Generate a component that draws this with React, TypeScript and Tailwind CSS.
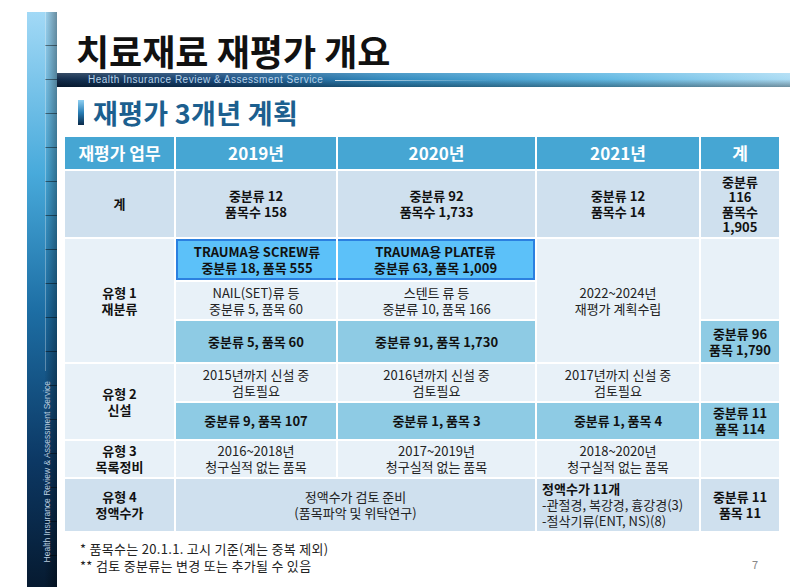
import React from 'react';

const head = 'flex items-center justify-center bg-[#46a6d3] text-white font-bold text-[17px]';
const sum = 'flex flex-col items-center justify-center bg-[#cfe0ee] font-bold';
const light = 'flex flex-col items-center justify-center bg-[#e8f1f8]';
const mid = 'flex flex-col items-center justify-center bg-[#8ecbe4] font-bold';
const trauma = 'flex flex-col items-center justify-center bg-[#5cc1f9] font-bold border-y-2 border-[#2b80e0]';

const App: React.FC = () => {
  return (
    <div className="w-[800px] h-[587px] bg-white flex overflow-hidden font-['Noto_Sans_CJK_KR',sans-serif] text-[#111]">
      {/* Side rail */}
      <div className="relative ml-[27px] mt-[12px] w-[30px] h-[575px] shrink-0 flex flex-col pb-[25px] bg-[linear-gradient(to_bottom,#a2d9f6_0%,#48aadb_28%,#1d6ea4_52%,#0c3864_78%,#061a30_100%)]">
        <div className="absolute right-0 top-0 h-full w-[12px] bg-[repeating-linear-gradient(to_bottom,transparent_0px,transparent_33px,rgba(0,0,0,0.45)_33px,rgba(0,0,0,0.45)_34px),linear-gradient(to_right,rgba(0,0,0,0.02),rgba(0,0,0,0.35))]" />
        <div className="relative ml-[18px] w-px flex-1 bg-white/30 mb-[10px]" />
        <span className="relative ml-[15px] rotate-180 [writing-mode:vertical-rl] font-['Liberation_Sans',sans-serif] text-[8.5px] leading-[10px] text-[#b9cde0] whitespace-nowrap">
          Health Insurance Review &amp; Assessment Service
        </span>
      </div>

      {/* Content */}
      <div className="w-[733px] shrink-0 flex flex-col">
        <div className="h-[73px] flex items-end pl-[19px] pb-[5px]">
          <h1 className="text-[36px] leading-none font-bold text-[#111]">치료재료 재평가 개요</h1>
        </div>

        <div className="h-[14px] flex items-center bg-[linear-gradient(to_bottom,rgba(255,255,255,0.18),rgba(255,255,255,0.04)_45%,rgba(0,0,0,0.35)),linear-gradient(to_right,#0a2443_0%,#13467a_22%,#2a86bc_45%,#5cb6e2_75%,#a9dbf4_100%)]">
          <span className="ml-[31px] font-['Liberation_Sans',sans-serif] text-[10px] leading-none tracking-[0.5px] text-[#b8d2e8] whitespace-nowrap">
            Health Insurance Review &amp; Assessment Service
          </span>
          <div className="ml-[12px] h-px w-[160px] bg-[linear-gradient(to_right,rgba(255,255,255,0.8),rgba(255,255,255,0))]" />
        </div>

        <div className="h-[50px] flex items-center pl-[21px] gap-[9px]">
          <div className="w-[6px] h-[25px] bg-[linear-gradient(to_bottom,#8fd0f2,#2a7fb6_50%,#0a2a4a)]" />
          <h2 className="text-[27px] leading-none font-bold text-[#1c5f8f] tracking-[0.3px]">재평가 3개년 계획</h2>
        </div>

        <div className="ml-[8px] w-[714px] grid grid-cols-[109px_160px_197px_162px_78px] grid-rows-[32px_66px_41px_37px_41px_37px_36px_36px_52px] gap-[2px] text-[13px] leading-[16px] text-center">
          <div className={head}>재평가 업무</div>
          <div className={head}>2019년</div>
          <div className={head}>2020년</div>
          <div className={head}>2021년</div>
          <div className={head}>계</div>

          <div className={sum}>계</div>
          <div className={sum}><span>중분류 12</span><span>품목수 158</span></div>
          <div className={sum}><span>중분류 92</span><span>품목수 1,733</span></div>
          <div className={sum}><span>중분류 12</span><span>품목수 14</span></div>
          <div className={`${sum} leading-[15px]`}><span>중분류</span><span>116</span><span>품목수</span><span>1,905</span></div>

          <div className={`${light} col-start-1 row-start-3 row-span-3 font-bold`}><span>유형 1</span><span>재분류</span></div>
          <div className={`${trauma} col-start-2 row-start-3 border-l-2`}><span>TRAUMA용 SCREW류</span><span>중분류 18, 품목 555</span></div>
          <div className={`${trauma} col-start-3 row-start-3 border-r-2`}><span>TRAUMA용 PLATE류</span><span>중분류 63, 품목 1,009</span></div>
          <div className={`${light} col-start-2 row-start-4 text-[#222]`}><span>NAIL(SET)류 등</span><span>중분류 5, 품목 60</span></div>
          <div className={`${light} col-start-3 row-start-4 text-[#222]`}><span>스텐트 류 등</span><span>중분류 10, 품목 166</span></div>
          <div className={`${mid} col-start-2 row-start-5`}>중분류 5, 품목 60</div>
          <div className={`${mid} col-start-3 row-start-5`}>중분류 91, 품목 1,730</div>
          <div className={`${light} col-start-4 row-start-3 row-span-3 text-[#222]`}><span>2022~2024년</span><span>재평가 계획수립</span></div>
          <div className={`${light} col-start-5 row-start-3 row-span-2`} />
          <div className={`${mid} col-start-5 row-start-5`}><span>중분류 96</span><span>품목 1,790</span></div>

          <div className={`${light} col-start-1 row-start-6 row-span-2 font-bold`}><span>유형 2</span><span>신설</span></div>
          <div className={`${light} col-start-2 row-start-6 text-[#222]`}><span>2015년까지 신설 중</span><span>검토필요</span></div>
          <div className={`${light} col-start-3 row-start-6 text-[#222]`}><span>2016년까지 신설 중</span><span>검토필요</span></div>
          <div className={`${light} col-start-4 row-start-6 text-[#222]`}><span>2017년까지 신설 중</span><span>검토필요</span></div>
          <div className={`${light} col-start-5 row-start-6`} />
          <div className={`${mid} col-start-2 row-start-7`}>중분류 9, 품목 107</div>
          <div className={`${mid} col-start-3 row-start-7`}>중분류 1, 품목 3</div>
          <div className={`${mid} col-start-4 row-start-7`}>중분류 1, 품목 4</div>
          <div className={`${mid} col-start-5 row-start-7`}><span>중분류 11</span><span>품목 114</span></div>

          <div className={`${light} font-bold`}><span>유형 3</span><span>목록정비</span></div>
          <div className={`${light} text-[#222]`}><span>2016~2018년</span><span>청구실적 없는 품목</span></div>
          <div className={`${light} text-[#222]`}><span>2017~2019년</span><span>청구실적 없는 품목</span></div>
          <div className={`${light} text-[#222]`}><span>2018~2020년</span><span>청구실적 없는 품목</span></div>
          <div className={light} />

          <div className={sum}><span>유형 4</span><span>정액수가</span></div>
          <div className="col-span-2 flex flex-col items-center justify-center bg-[#cfe0ee] text-[#222]"><span>정액수가 검토 준비</span><span>(품목파악 및 위탁연구)</span></div>
          <div className="flex flex-col items-start justify-center bg-[#cfe0ee] pl-[5px] text-left text-[#222]">
            <span className="font-bold text-[#111]">정액수가 11개</span>
            <span>-관절경, 복강경, 흉강경(3)</span>
            <span>-절삭기류(ENT, NS)(8)</span>
          </div>
          <div className={sum}><span>중분류 11</span><span>품목 11</span></div>
        </div>

        <div className="mt-[9px] flex items-end justify-between pl-[23px] pr-[32px]">
          <div className="flex flex-col text-[13px] leading-[17px] tracking-[0.3px] text-[#222]">
            <span>* 품목수는 20.1.1. 고시 기준(계는 중복 제외)</span>
            <span>** 검토 중분류는 변경 또는 추가될 수 있음</span>
          </div>
          <span className="mb-[4px] text-[11px] leading-none text-[#888]">7</span>
        </div>
      </div>
    </div>
  );
};

export default App;
